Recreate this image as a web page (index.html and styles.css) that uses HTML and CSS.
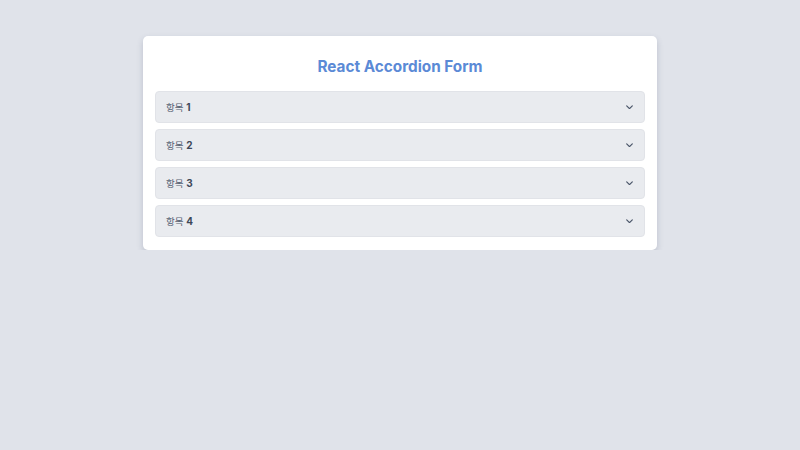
FILE: index.html
```html
<!DOCTYPE html>
<html lang="ko">
<head>
<meta charset="utf-8">
<title>React Accordion Form</title>
<link rel="stylesheet" href="styles.css">
</head>
<body>
<div class="card">
  <h1 class="title">React Accordion Form</h1>
  <div class="list">
    <div class="item"><span class="label">항목 <b>1</b></span><svg class="chev" viewBox="0 0 10 6" width="7" height="4.5"><path d="M1 1l4 4 4-4" fill="none" stroke="#4a5568" stroke-width="1.7" stroke-linecap="round" stroke-linejoin="round"/></svg></div>
    <div class="item"><span class="label">항목 <b>2</b></span><svg class="chev" viewBox="0 0 10 6" width="7" height="4.5"><path d="M1 1l4 4 4-4" fill="none" stroke="#4a5568" stroke-width="1.7" stroke-linecap="round" stroke-linejoin="round"/></svg></div>
    <div class="item"><span class="label">항목 <b>3</b></span><svg class="chev" viewBox="0 0 10 6" width="7" height="4.5"><path d="M1 1l4 4 4-4" fill="none" stroke="#4a5568" stroke-width="1.7" stroke-linecap="round" stroke-linejoin="round"/></svg></div>
    <div class="item"><span class="label">항목 <b>4</b></span><svg class="chev" viewBox="0 0 10 6" width="7" height="4.5"><path d="M1 1l4 4 4-4" fill="none" stroke="#4a5568" stroke-width="1.7" stroke-linecap="round" stroke-linejoin="round"/></svg></div>
  </div>
</div>
</body>
</html>
```
FILE: styles.css
```css
html, body {
  margin: 0;
  padding: 0;
}
body {
  background: #e0e3ea;
  font-family: Inter, "Noto Sans CJK KR", sans-serif;
  padding-top: 36px;
}
.card {
  width: 514px;
  box-sizing: border-box;
  margin: 0 auto;
  background: #ffffff;
  border-radius: 5px;
  padding: 12px 12px 13px;
  box-shadow: 0 3px 6px rgba(60, 70, 100, 0.22);
}
.title {
  margin: 8px 0 13px;
  text-align: center;
  font-size: 15.3px;
  line-height: 22px;
  font-weight: 700;
  color: #5b8ad6;
}
.list {
  display: flex;
  flex-direction: column;
  gap: 6px;
}
.item {
  height: 32px;
  box-sizing: border-box;
  border: 1px solid #e1e3e8;
  background: #e9ebef;
  border-radius: 4px;
  display: flex;
  align-items: center;
  justify-content: space-between;
  padding: 0 11px 1px 10px;
}
.label {
  font-size: 9.5px;
  color: #566173;
}
.label b {
  font-weight: 700;
  font-size: 10px;
  color: #3d4758;
}
.chev {
  display: block;
  margin-top: 1px;
}
```
